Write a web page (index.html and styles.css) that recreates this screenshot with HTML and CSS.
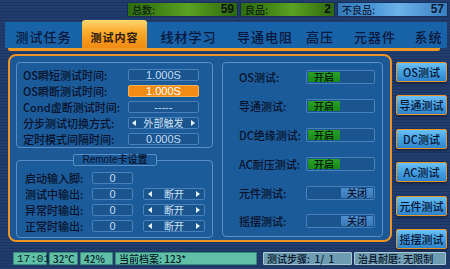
FILE: index.html
```html
<!DOCTYPE html>
<html lang="zh">
<head>
<meta charset="utf-8">
<title>测试内容</title>
<link rel="stylesheet" href="styles.css">
</head>
<body>
<div class="screen">
  <div class="top">
    <div class="counter counter-green w-total"><span>总数:</span><b>59</b></div>
    <div class="counter counter-green w-good"><span>良品:</span><b>2</b></div>
    <div class="counter counter-blue w-bad"><span>不良品:</span><b>57</b></div>
  </div>

  <div class="tabs">
    <div class="tab t1">测试任务</div>
    <div class="tab t2 active">测试内容</div>
    <div class="tab t3">线材学习</div>
    <div class="tab t4">导通电阻</div>
    <div class="tab t5">高压</div>
    <div class="tab t6">元器件</div>
    <div class="tab t7">系统</div>
  </div>
  <div class="rule"></div>

  <div class="main">
    <div class="panel">
      <div class="col-left">
        <div class="box box-top">
          <div class="row"><span class="lbl">OS瞬短测试时间:</span><span class="val">1.000S</span></div>
          <div class="row"><span class="lbl">OS瞬断测试时间:</span><span class="val hl">1.000S</span></div>
          <div class="row"><span class="lbl">Cond虚断测试时间:</span><span class="val">-----</span></div>
          <div class="row"><span class="lbl">分步测试切换方式:</span><span class="val sel"><i class="al"></i>外部触发<i class="ar"></i></span></div>
          <div class="row"><span class="lbl">定时模式间隔时间:</span><span class="val">0.000S</span></div>
        </div>
        <div class="box box-remote">
          <div class="legend">Remote卡设置</div>
          <div class="rrow"><span class="rlbl">启动输入脚:</span><span class="zero">0</span></div>
          <div class="rrow"><span class="rlbl">测试中输出:</span><span class="zero">0</span><span class="val rsel"><i class="al"></i>断开<i class="ar"></i></span></div>
          <div class="rrow"><span class="rlbl">异常时输出:</span><span class="zero">0</span><span class="val rsel"><i class="al"></i>断开<i class="ar"></i></span></div>
          <div class="rrow"><span class="rlbl">正常时输出:</span><span class="zero">0</span><span class="val rsel"><i class="al"></i>断开<i class="ar"></i></span></div>
        </div>
      </div>
      <div class="box col-right">
        <div class="trow"><span class="tlbl">OS测试:</span><span class="switch"><span class="on">开启</span></span></div>
        <div class="trow"><span class="tlbl">导通测试:</span><span class="switch"><span class="on">开启</span></span></div>
        <div class="trow"><span class="tlbl">DC绝缘测试:</span><span class="switch"><span class="on">开启</span></span></div>
        <div class="trow"><span class="tlbl">AC耐压测试:</span><span class="switch"><span class="on">开启</span></span></div>
        <div class="trow"><span class="tlbl">元件测试:</span><span class="switch off"><span class="offk">关闭</span></span></div>
        <div class="trow"><span class="tlbl">摇摆测试:</span><span class="switch off"><span class="offk">关闭</span></span></div>
      </div>
    </div>
    <div class="side">
      <div class="sbtn">OS测试</div>
      <div class="sbtn">导通测试</div>
      <div class="sbtn">DC测试</div>
      <div class="sbtn">AC测试</div>
      <div class="sbtn">元件测试</div>
      <div class="sbtn">摇摆测试</div>
    </div>
  </div>

  <div class="status">
    <div class="st teal w-time">17:01</div>
    <div class="st teal w-temp">32℃</div>
    <div class="st teal w-hum">42%</div>
    <div class="st teal w-file">当前档案: 123*</div>
    <div class="st grey w-step">测试步骤: &nbsp;1/ &nbsp;1</div>
    <div class="st grey w-fix">治具耐磨: 无限制</div>
  </div>
</div>
</body>
</html>
```

FILE: styles.css
```css
html, body {
  margin: 0;
  padding: 0;
}
body {
  width: 450px;
  height: 269px;
  overflow: hidden;
  font-family: "Noto Sans CJK SC", "Liberation Sans", sans-serif;
  background: #203b6b repeating-linear-gradient(180deg, #213d6e 0, #213d6e 2px, #1b3462 2px, #1b3462 3px);
  color: #06112a;
}
.screen {
  width: 450px;
  height: 269px;
  display: flex;
  flex-direction: column;
}

/* top counters */
.top {
  height: 20px;
  display: flex;
  justify-content: flex-end;
  align-items: flex-start;
  gap: 2px;
  padding-right: 2px;
  box-sizing: border-box;
}
.counter {
  margin-top: 2px;
  height: 15px;
  box-sizing: border-box;
  display: flex;
  justify-content: space-between;
  align-items: center;
  padding: 0 3px 0 4px;
  font-size: 10px;
  font-weight: 500;
  line-height: 15px;
  color: #0c1e10;
  border: 1px solid #16305a;
}
.counter b {
  font-family: "Liberation Sans", sans-serif;
  font-weight: bold;
  font-size: 12px;
  color: #08140a;
}
.counter-green {
  background: linear-gradient(90deg, #2f6d12 0%, #3f8016 25%, #5aa222 55%, #3c7a14 85%, #2d6610 100%);
}
.counter-blue {
  background: linear-gradient(90deg, #3579b8 0%, #4a94d4 30%, #6cb2ea 55%, #4a90cf 85%, #3a7dbc 100%);
  color: #0c1e3c;
}
.counter-blue b { color: #0a1a34; }
.w-total { width: 111px; }
.w-good { width: 95px; }
.w-bad { width: 111px; }

/* tabs */
.tabs {
  margin: 2px 3px 0 5px;
  height: 26px;
  background: #1862a8;
  display: flex;
  align-items: stretch;
}
.tab {
  display: flex;
  align-items: center;
  justify-content: center;
  font-size: 13px;
  font-weight: 500;
  letter-spacing: 1px;
  color: #06183c;
  padding-top: 2px;
  box-sizing: border-box;
}
.tab.active {
  margin-top: -2px;
  height: 30px;
  font-size: 11px;
  font-weight: bold;
  letter-spacing: 1px;
  color: #2a1a08;
  background: linear-gradient(180deg, #ffd870 0%, #fbb034 35%, #f59618 70%, #ef8a12 100%);
  border-radius: 3px 3px 0 0;
  padding-top: 4px;
}
.t1 { width: 77px; }
.t2 { width: 65px; }
.t3 { width: 83px; }
.t4 { width: 70px; }
.t5 { width: 40px; }
.t6 { width: 70px; }
.t7 { width: 37px; }

.rule {
  margin: 0 10px 0 8px;
  height: 3px;
  background: #ee9826;
  border-radius: 0 0 2px 2px;
}

/* main */
.main {
  margin-top: 3px;
  height: 197px;
  display: flex;
  gap: 4px;
  padding-left: 8px;
}
.panel {
  width: 384px;
  height: 188px;
  box-sizing: border-box;
  border: 2px solid #ec9426;
  border-radius: 8px;
  background: #1c5996;
  padding: 6px 7px 2px 6px;
  display: flex;
  gap: 9px;
}
.box {
  border: 1px solid #5a8fc6;
  border-radius: 4px;
  background: #1c5b99;
  box-sizing: border-box;
}
.col-left {
  width: 197px;
  display: flex;
  flex-direction: column;
  gap: 12px;
}
.box-top {
  height: 87px;
  padding: 4px 0 0 6px;
}
.row {
  height: 16px;
  display: flex;
  align-items: center;
}
.lbl, .rlbl, .tlbl {
  font-size: 11px;
  font-weight: 500;
  line-height: 14px;
  white-space: nowrap;
  color: #06112a;
}
.lbl { width: 105px; }
.val {
  width: 71px;
  height: 12px;
  box-sizing: border-box;
  border: 1px solid #4a80ba;
  border-radius: 2px;
  background: #1a5590;
  color: #c4dcf4;
  font-family: "Liberation Sans", sans-serif;
  font-size: 11px;
  line-height: 10px;
  text-align: center;
  display: flex;
  align-items: center;
  justify-content: center;
}
.val.hl {
  background: #f28c14;
  border-color: #f7b050;
  color: #ffffff;
}
.sel, .rsel {
  justify-content: space-between;
  padding: 0 3px;
  font-family: "Noto Sans CJK SC", sans-serif;
  font-size: 10px;
  color: #cfe2f6;
}
.al, .ar {
  width: 0;
  height: 0;
  border-top: 3px solid transparent;
  border-bottom: 3px solid transparent;
}
.al { border-right: 4px solid #e8f2ff; }
.ar { border-left: 4px solid #e8f2ff; }

.box-remote {
  height: 79px;
  padding: 0 0 0 8px;
}
.legend {
  width: 84px;
  height: 12px;
  margin: -7px 0 0 48px;
  box-sizing: border-box;
  border: 1px solid #5a8fc6;
  border-radius: 2px;
  background: #1c5b99;
  font-family: "Liberation Sans", "Noto Sans CJK SC", sans-serif;
  font-size: 10px;
  font-weight: 500;
  line-height: 10px;
  text-align: center;
  color: #06112a;
}
.rrow {
  height: 16px;
  display: flex;
  align-items: center;
}
.legend + .rrow { margin-top: 4px; }
.rlbl { width: 67px; }
.zero {
  width: 41px;
  height: 12px;
  box-sizing: border-box;
  border: 1px solid #4a80ba;
  border-radius: 2px;
  background: #1a5590;
  color: #c4dcf4;
  font-family: "Liberation Sans", sans-serif;
  font-size: 11px;
  line-height: 10px;
  text-align: center;
  margin-right: 10px;
}
.rsel { width: 62px; padding: 0 4px; }

.col-right {
  width: 161px;
  height: 175px;
  padding: 0 0 0 16px;
}
.trow {
  height: 28.8px;
  display: flex;
  align-items: center;
}
.tlbl { width: 67px; }
.switch {
  width: 69px;
  height: 14px;
  box-sizing: border-box;
  border: 1px solid #4a80ba;
  border-radius: 2px;
  background: #1a5590;
  display: flex;
  align-items: stretch;
  padding: 1px;
}
.switch.off { justify-content: flex-end; }
.on, .offk {
  width: 32px;
  font-size: 10px;
  font-weight: 500;
  line-height: 10px;
  text-align: center;
  border-radius: 1px;
}
.on {
  background: linear-gradient(180deg, #2aa02a, #178a18);
  color: #041806;
}
.offk {
  background: linear-gradient(180deg, #4c8ed0, #3a7ab8);
  color: #06112a;
}

.side {
  width: 51px;
  padding-top: 8px;
  display: flex;
  flex-direction: column;
  gap: 13.4px;
}
.sbtn {
  height: 20px;
  box-sizing: border-box;
  border: 1px solid #e8922a;
  border-radius: 2px;
  background: linear-gradient(180deg, #6cc2f6 0%, #44a0e2 50%, #2e84cc 100%);
  box-shadow: 0 2px 3px rgba(20, 20, 30, 0.5);
  color: #081634;
  font-size: 11px;
  font-weight: 500;
  line-height: 18px;
  text-align: center;
  white-space: nowrap;
}

/* status */
.status {
  margin-top: 1px;
  height: 13px;
  display: flex;
  gap: 2px;
  padding-left: 13px;
}
.st {
  height: 13px;
  box-sizing: border-box;
  font-size: 10px;
  font-weight: 500;
  line-height: 12px;
  white-space: nowrap;
  border-radius: 1px;
  padding: 0 3px;
}
.teal {
  background: #5fc0a6;
  color: #06202a;
  border: 1px solid #3a8a80;
}
.grey {
  background: #6e9cb0;
  color: #06142c;
  border: 1px solid #a9c8d4;
}
.w-time { width: 34px; font-family: "Liberation Mono", monospace; font-size: 11px; }
.w-temp { width: 29px; }
.w-hum { width: 33px; }
.w-file { width: 142px; }
.w-step { width: 89px; margin-left: 4px; }
.w-fix { width: 92px; }
```
